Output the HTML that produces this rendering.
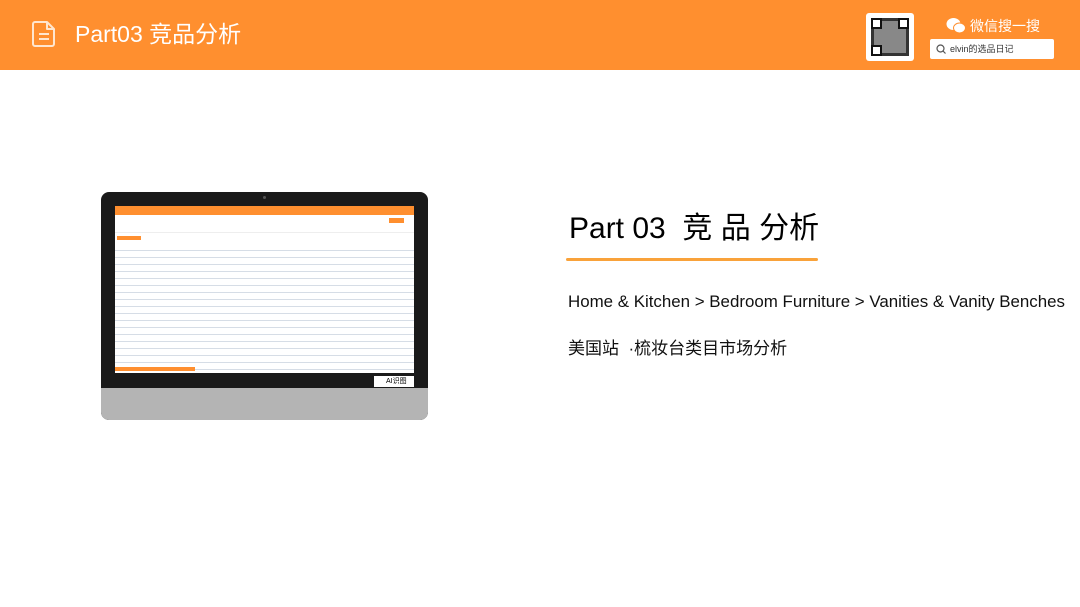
<!DOCTYPE html>
<html><head><meta charset="utf-8"><style>
*{margin:0;padding:0;box-sizing:border-box}
body{width:1080px;height:607px;overflow:hidden;background:#fff;font-family:"Liberation Sans","Noto Sans CJK SC",sans-serif;position:relative}
.hdr{position:absolute;left:0;top:0;width:1080px;height:70px;background:#FF8F2F}
.ttl{position:absolute;left:75px;top:18px;color:#fff;font-size:23px;line-height:32px}
.qr{position:absolute;left:866px;top:13px;width:48px;height:48px;background:#fff;border-radius:3px}
.wx{position:absolute;left:970px;top:16px;color:#fff;font-size:14px}
.sb{position:absolute;left:930px;top:39px;width:124px;height:20px;background:#fff;border-radius:2px;font-size:9px;color:#333;line-height:20px;padding-left:20px}
.mon{position:absolute;left:101px;top:192px;width:327px;height:228px;background:#1a1a1a;border-radius:8px;overflow:hidden}
.base{position:absolute;left:0;top:196px;width:327px;height:32px;background:#b4b4b4}
.scr{position:absolute;left:14px;top:14px;width:299px;height:167px;background:#fff;overflow:hidden}
.h1{position:absolute;left:569px;top:203px;font-size:30px;color:#000;white-space:nowrap}
.line{position:absolute;left:566px;top:258px;width:252px;height:3px;background:#F9A23A;border-radius:2px}
.bc{position:absolute;left:568px;top:292px;font-size:16.9px;color:#111;white-space:nowrap}
.cn{position:absolute;left:568px;top:334px;font-size:17px;color:#111;white-space:nowrap}
</style></head><body>
<div class="hdr">
<svg style="position:absolute;left:31px;top:20px" width="26" height="28" viewBox="0 0 26 28"><path d="M4 2h12l7 7v15a2 2 0 0 1-2 2H4a2 2 0 0 1-2-2V4a2 2 0 0 1 2-2z M16 2v7h7 M8 14h10 M8 19h10" fill="none" stroke="#ffe6cf" stroke-width="2" stroke-linejoin="round"/></svg>
<div class="ttl">Part03 竞品分析</div>
<div class="qr"><svg width="48" height="48" viewBox="0 0 48 48"><rect x="5" y="5" width="38" height="38" fill="#333"/><rect x="8" y="8" width="32" height="32" fill="#888"/><rect x="5" y="5" width="11" height="11" fill="#111"/><rect x="7" y="7" width="7" height="7" fill="#fff"/><rect x="32" y="5" width="11" height="11" fill="#111"/><rect x="34" y="7" width="7" height="7" fill="#fff"/><rect x="5" y="32" width="11" height="11" fill="#111"/><rect x="7" y="34" width="7" height="7" fill="#fff"/></svg></div>
<svg style="position:absolute;left:946px;top:17px" width="20" height="17" viewBox="0 0 20 17"><ellipse cx="7.5" cy="7" rx="7" ry="6" fill="#fff"/><ellipse cx="13.5" cy="11" rx="6" ry="5" fill="#fff" stroke="#FF8F2F" stroke-width="1"/></svg>
<div class="wx">微信搜一搜</div>
<div class="sb"><svg style="position:absolute;left:6px;top:5px" width="10" height="10"><circle cx="4.5" cy="4.5" r="3.5" fill="none" stroke="#555" stroke-width="1.2"/><path d="M7 7l2.5 2.5" stroke="#555" stroke-width="1.2"/></svg>elvin的选品日记</div>
</div>
<div class="mon">
<div style="position:absolute;left:162px;top:4px;width:3px;height:3px;background:#555;border-radius:2px"></div>
<div class="scr">
<div style="height:9px;background:#FF8F2F"></div>
<div style="height:18px;border-bottom:1px solid #eee"></div>
<div style="position:absolute;right:10px;top:12px;width:15px;height:5px;background:#FF8F2F"></div>
<div style="position:absolute;left:2px;top:30px;width:24px;height:4px;background:#FF8F2F"></div>
<div style="position:absolute;left:0;top:39px;width:299px;height:125px;background:repeating-linear-gradient(#fff 0,#fff 5px,#d6dde6 5px,#d6dde6 6px,#fff 6px,#fff 7px)"></div>
<div style="position:absolute;left:0;top:161px;width:80px;height:4px;background:#FF8F2F"></div>
</div>
<div style="position:absolute;left:273px;top:184px;width:40px;height:11px;background:#fff;font-size:7px;line-height:11px;padding-left:12px">AI识图</div>
<div class="base"></div>
</div>
<div class="h1">Part 03&nbsp; 竞 品 分析</div>
<div class="line"></div>
<div class="bc">Home &amp; Kitchen &gt; Bedroom Furniture &gt; Vanities &amp; Vanity Benches</div>
<div class="cn">美国站 &nbsp;·梳妆台类目市场分析</div>
</body></html>
